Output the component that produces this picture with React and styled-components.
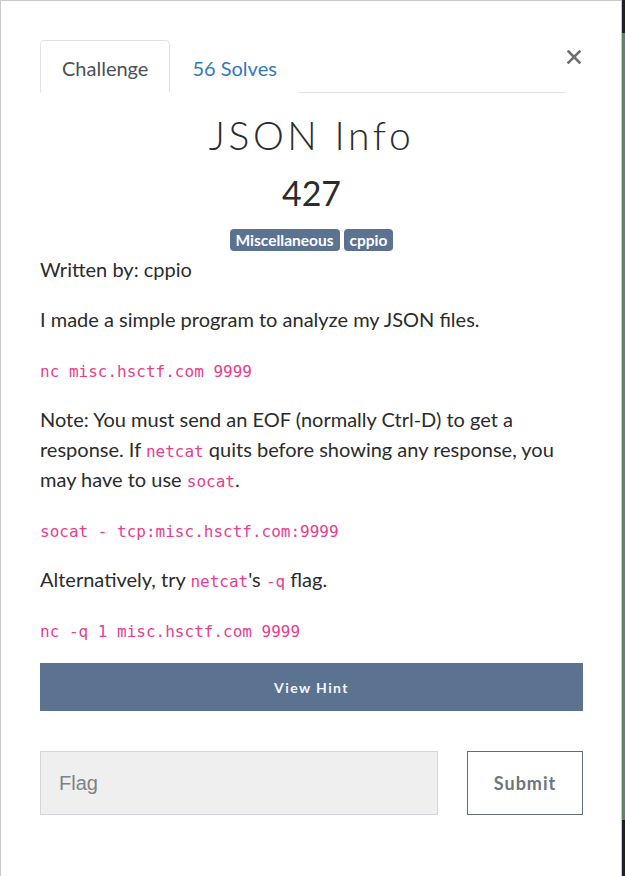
import React from "react";
import styled, { createGlobalStyle } from "styled-components";

const Global = createGlobalStyle`
  html, body { margin: 0; padding: 0; }
  body {
    width: 625px;
    height: 876px;
    overflow: hidden;
    background: linear-gradient(to bottom, #1f1f27 0, #1f1f27 33px, #5d8565 33px, #5d8565 820px, #1f1f27 820px);
    font-family: Lato, "Open Sans", sans-serif;
    color: #212529;
  }
`;

const Modal = styled.div`
  width: 622px;
  height: 876px;
  box-sizing: border-box;
  background: #fff;
  border: 1px solid #c9c9c9;
  border-bottom: none;
  padding: 39px 38px 0 39px;
`;

const Header = styled.div`
  display: flex;
  align-items: flex-start;
`;

const Tabs = styled.nav`
  flex: 1;
  display: flex;
  border-bottom: 1px solid #dee2e6;
`;

const Tab = styled.a`
  display: flex;
  align-items: center;
  box-sizing: border-box;
  height: 53px;
  padding: 2px 21px 0;
  margin-bottom: -1px;
  font-size: 20px;
  text-decoration: none;
  border: 1px solid ${(p) => (p.$active ? "#dee2e6" : "transparent")};
  border-bottom-color: ${(p) => (p.$active ? "#fff" : "transparent")};
  border-radius: 5px 5px 0 0;
  color: ${(p) => (p.$active ? "#495057" : "#3479b8")};
  background: #fff;
`;

const Close = styled.button`
  border: none;
  background: none;
  padding: 0;
  margin-top: 7px;
  width: 18px;
  height: 20px;
  cursor: pointer;
  display: flex;
  align-items: center;
  justify-content: center;
`;

const Title = styled.h2`
  margin: 14px 0 0;
  text-align: center;
  font-weight: 300;
  font-size: 39px;
  letter-spacing: 3.6px;
  line-height: 56px;
  color: #2b2b2b;
`;

const Value = styled.h3`
  margin: 4px 0 0;
  text-align: center;
  font-weight: 400;
  font-size: 34px;
  line-height: 52px;
  color: #2b2b2b;
`;

const Tags = styled.div`
  display: flex;
  justify-content: center;
  gap: 4px;
  margin-top: 10px;
`;

const Badge = styled.span`
  display: inline-block;
  background: #5b7290;
  color: #fff;
  font-weight: 700;
  font-size: 15.5px;
  line-height: 22px;
  padding: 0 6px;
  border-radius: 4px;
`;

const Desc = styled.div`
  font-size: 20px;
  line-height: 30px;
  color: #2b2b2b;
  margin-top: 3px;
`;

const P = styled.p`
  margin: 0 0 20px;
`;

const Code = styled.code`
  font-family: "DejaVu Sans Mono", "Liberation Mono", monospace;
  font-size: 16px;
  line-height: 1;
  color: #e83e8c;
`;

const HintButton = styled.button`
  display: block;
  width: 100%;
  height: 48px;
  margin-top: -1px;
  border: none;
  background: #5b7290;
  color: #f4f6f9;
  font-family: Lato, sans-serif;
  font-weight: 700;
  font-size: 14px;
  letter-spacing: 1.4px;
`;

const SubmitRow = styled.form`
  display: grid;
  grid-template-columns: 1fr 116px;
  gap: 29px;
  margin-top: 40px;
`;

const FlagInput = styled.input`
  height: 64px;
  box-sizing: border-box;
  background: #efefef;
  border: 1px solid #d4d4da;
  padding: 0 18px;
  font-family: "Liberation Sans", Arial, sans-serif;
  font-size: 20px;
  color: #333;
  outline: none;
  &::placeholder { color: #7d8288; }
`;

const SubmitButton = styled.button`
  height: 64px;
  box-sizing: border-box;
  background: #fff;
  border: 1px solid #5f6b78;
  color: #6c757d;
  font-family: Lato, sans-serif;
  font-weight: 700;
  font-size: 18px;
  letter-spacing: 1px;
`;

export default function App() {
  return (
    <>
      <Global />
      <Modal>
        <Header>
          <Tabs>
            <Tab $active href="#">Challenge</Tab>
            <Tab href="#">56 Solves</Tab>
          </Tabs>
          <Close aria-label="Close">
            <svg width="14" height="14" viewBox="0 0 14 14">
              <path d="M1.5 1.5 L12.5 12.5 M12.5 1.5 L1.5 12.5" stroke="#6f6f6f" strokeWidth="2.6" strokeLinecap="square" />
            </svg>
          </Close>
        </Header>
        <Title>JSON Info</Title>
        <Value>427</Value>
        <Tags>
          <Badge>Miscellaneous</Badge>
          <Badge>cppio</Badge>
        </Tags>
        <Desc>
          <P>Written by: cppio</P>
          <P>I made a simple program to analyze my JSON files.</P>
          <P><Code>nc misc.hsctf.com 9999</Code></P>
          <P>
            Note: You must send an EOF (normally Ctrl-D) to get a response. If <Code>netcat</Code> quits before showing any response, you may have to use <Code>socat</Code>.
          </P>
          <P><Code>socat - tcp:misc.hsctf.com:9999</Code></P>
          <P>
            Alternatively, try <Code>netcat</Code>'s <Code>-q</Code> flag.
          </P>
          <P><Code>nc -q 1 misc.hsctf.com 9999</Code></P>
        </Desc>
        <HintButton type="button">View Hint</HintButton>
        <SubmitRow onSubmit={(e) => e.preventDefault()}>
          <FlagInput placeholder="Flag" />
          <SubmitButton type="submit">Submit</SubmitButton>
        </SubmitRow>
      </Modal>
    </>
  );
}
